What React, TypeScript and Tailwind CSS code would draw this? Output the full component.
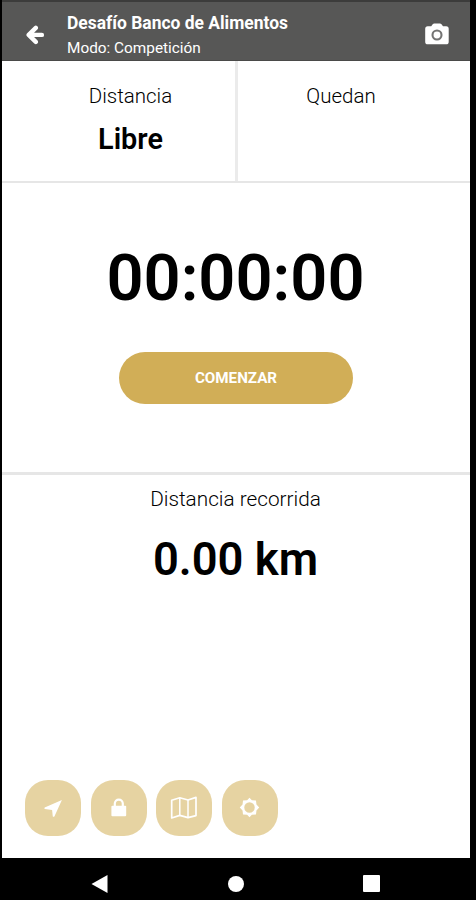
import type { ReactNode } from "react";

function ArrowBackIcon() {
  return (
    <svg className="h-[20px] w-[20px]" viewBox="0 0 20 20" fill="none" stroke="currentColor" strokeWidth="4.4">
      <path d="M10.8 2.9 3.7 9.9l7.1 7M4.2 9.9h12.7" strokeLinejoin="round" strokeLinecap="round" />
    </svg>
  );
}

function CameraIcon() {
  return (
    <svg className="h-[22px] w-[26px]" viewBox="0 0 26 22">
      <path
        d="M7.2 3.2 8.7 1.3Q9.3.6 10.3.6h5.6q1 0 1.6.7L19 3.2h3.2q2.5 0 2.5 2.5v13q0 2.6-2.6 2.6H3.8q-2.6 0-2.6-2.6v-13q0-2.5 2.5-2.5Z"
        fill="currentColor"
      />
      <circle cx="13" cy="12" r="4.5" fill="none" stroke="#747473" strokeWidth="2.1" />
    </svg>
  );
}

function NavigateIcon() {
  return (
    <svg className="h-[20px] w-[20px]" viewBox="0 0 20 20" fill="currentColor">
      <path d="M18.9 1.9 11.4 18.4q-1 .9-1.6 0L9.1 12 1.8 11q-.9-.7-.1-1.6Z" />
    </svg>
  );
}

function LockIcon() {
  return (
    <svg className="h-[20px] w-[20px]" viewBox="0 0 20 20">
      <path d="M5.8 9V5.6a4 4 0 0 1 8 0V9" fill="none" stroke="currentColor" strokeWidth="2.2" />
      <rect x="2.4" y="7.8" width="14.8" height="10.4" rx="1" fill="currentColor" />
    </svg>
  );
}

function MapIcon() {
  return (
    <svg className="h-[24px] w-[28px]" viewBox="0 0 28 24" fill="none" stroke="currentColor" strokeLinejoin="round">
      <path d="M1.7 4.2 9.8 1.8 18 4l8-2.6v18.2L18 21.6l-8.2-2.2-8.1 2.6Z" strokeWidth="1.7" />
      <path d="M9.8 2v17.4M18 4v17.6" strokeWidth="1.5" />
    </svg>
  );
}

function SettingsIcon() {
  return (
    <svg className="-mt-px -ml-px h-[21px] w-[21px]" viewBox="0 0 22 22">
      <path
        d="M11 .8 13.5 3.5 17.8 3.6 18.3 7.8 21.2 11 18.3 14.2 17.8 18.4 13.5 18.5 11 21.2 8.5 18.5 4.2 18.4 3.7 14.2.8 11 3.7 7.8 4.2 3.6 8.5 3.5ZM11 5.5a5.5 5.5 0 1 0 0 11a5.5 5.5 0 1 0 0-11Z"
        fill="currentColor"
        fillRule="evenodd"
      />
    </svg>
  );
}

function ToolButton({ label, children }: { label: string; children: ReactNode }) {
  return (
    <button
      type="button"
      aria-label={label}
      className="flex h-[56px] w-[56px] items-center justify-center rounded-[23px] bg-[#e6d3a2] text-white"
    >
      {children}
    </button>
  );
}

export default function App() {
  return (
    <div className="flex h-[900px] w-[476px] flex-col bg-black pr-[6px] pl-[2px] font-['Roboto',sans-serif] text-black">
      <header className="flex h-[61px] shrink-0 items-center border-t-2 border-b border-t-[#3c3c3b] border-b-[#4a4a49] bg-[#575756] pr-[20px] pl-[23px] text-white">
        <button type="button" aria-label="Volver" className="mt-[7px]">
          <ArrowBackIcon />
        </button>
        <div className="mt-[8px] ml-[22px] flex-1">
          <h1 className="text-[17.45px] leading-[26px] font-bold whitespace-nowrap">Desafío Banco de Alimentos</h1>
          <p className="text-[15.35px] leading-[24px] whitespace-nowrap">Modo: Competición</p>
        </div>
        <button type="button" aria-label="Cámara" className="mt-[6px]">
          <CameraIcon />
        </button>
      </header>

      <main className="flex h-[797px] shrink-0 flex-col bg-white">
        <section className="flex h-[122px] border-b-2 border-[#e6e6e6] text-center">
          <div className="w-[236px] border-r-3 border-[#ebebeb] pt-[21px] pl-[24px]">
            <p className="text-[20.5px] leading-[28px] font-light">Distancia</p>
            <p className="mt-[12px] text-[28.8px] leading-[34px] font-semibold">Libre</p>
          </div>
          <div className="flex-1 pt-[21px] pr-[26px]">
            <p className="text-[20.5px] leading-[28px] font-light">Quedan</p>
          </div>
        </section>

        <section className="flex h-[292px] flex-col items-center border-b-3 border-[#e6e6e6] pt-[57px]">
          <p className="-ml-px text-[65px] leading-[76px] font-semibold">00:00:00</p>
          <button
            type="button"
            className="mt-[36px] h-[52px] w-[234px] rounded-[26px] bg-[#d1ae57] text-[15.2px] font-bold text-white"
          >
            COMENZAR
          </button>
        </section>

        <section className="flex flex-1 flex-col items-center pt-[10px]">
          <p className="-ml-px text-[20.75px] leading-[28px] font-light">Distancia recorrida</p>
          <p className="mt-[20px] -ml-px text-[45.3px] leading-[54px] font-semibold">0.00 km</p>
          <div className="mt-auto flex gap-[9.6px] self-start pb-[22px] pl-[23px]">
            <ToolButton label="Ubicación">
              <NavigateIcon />
            </ToolButton>
            <ToolButton label="Bloquear">
              <LockIcon />
            </ToolButton>
            <ToolButton label="Mapa">
              <MapIcon />
            </ToolButton>
            <ToolButton label="Ajustes">
              <SettingsIcon />
            </ToolButton>
          </div>
        </section>
      </main>

      <nav className="flex flex-1 items-center justify-between pt-[9px] pr-[90px] pl-[89px] text-white">
        <svg className="h-[18px] w-[17px]" viewBox="0 0 17 18" fill="currentColor">
          <path d="M16.5 0v18L.5 9Z" />
        </svg>
        <span className="h-[16px] w-[16px] rounded-full bg-white" />
        <span className="h-[17px] w-[17px] rounded-[1px] bg-white" />
      </nav>
    </div>
  );
}
